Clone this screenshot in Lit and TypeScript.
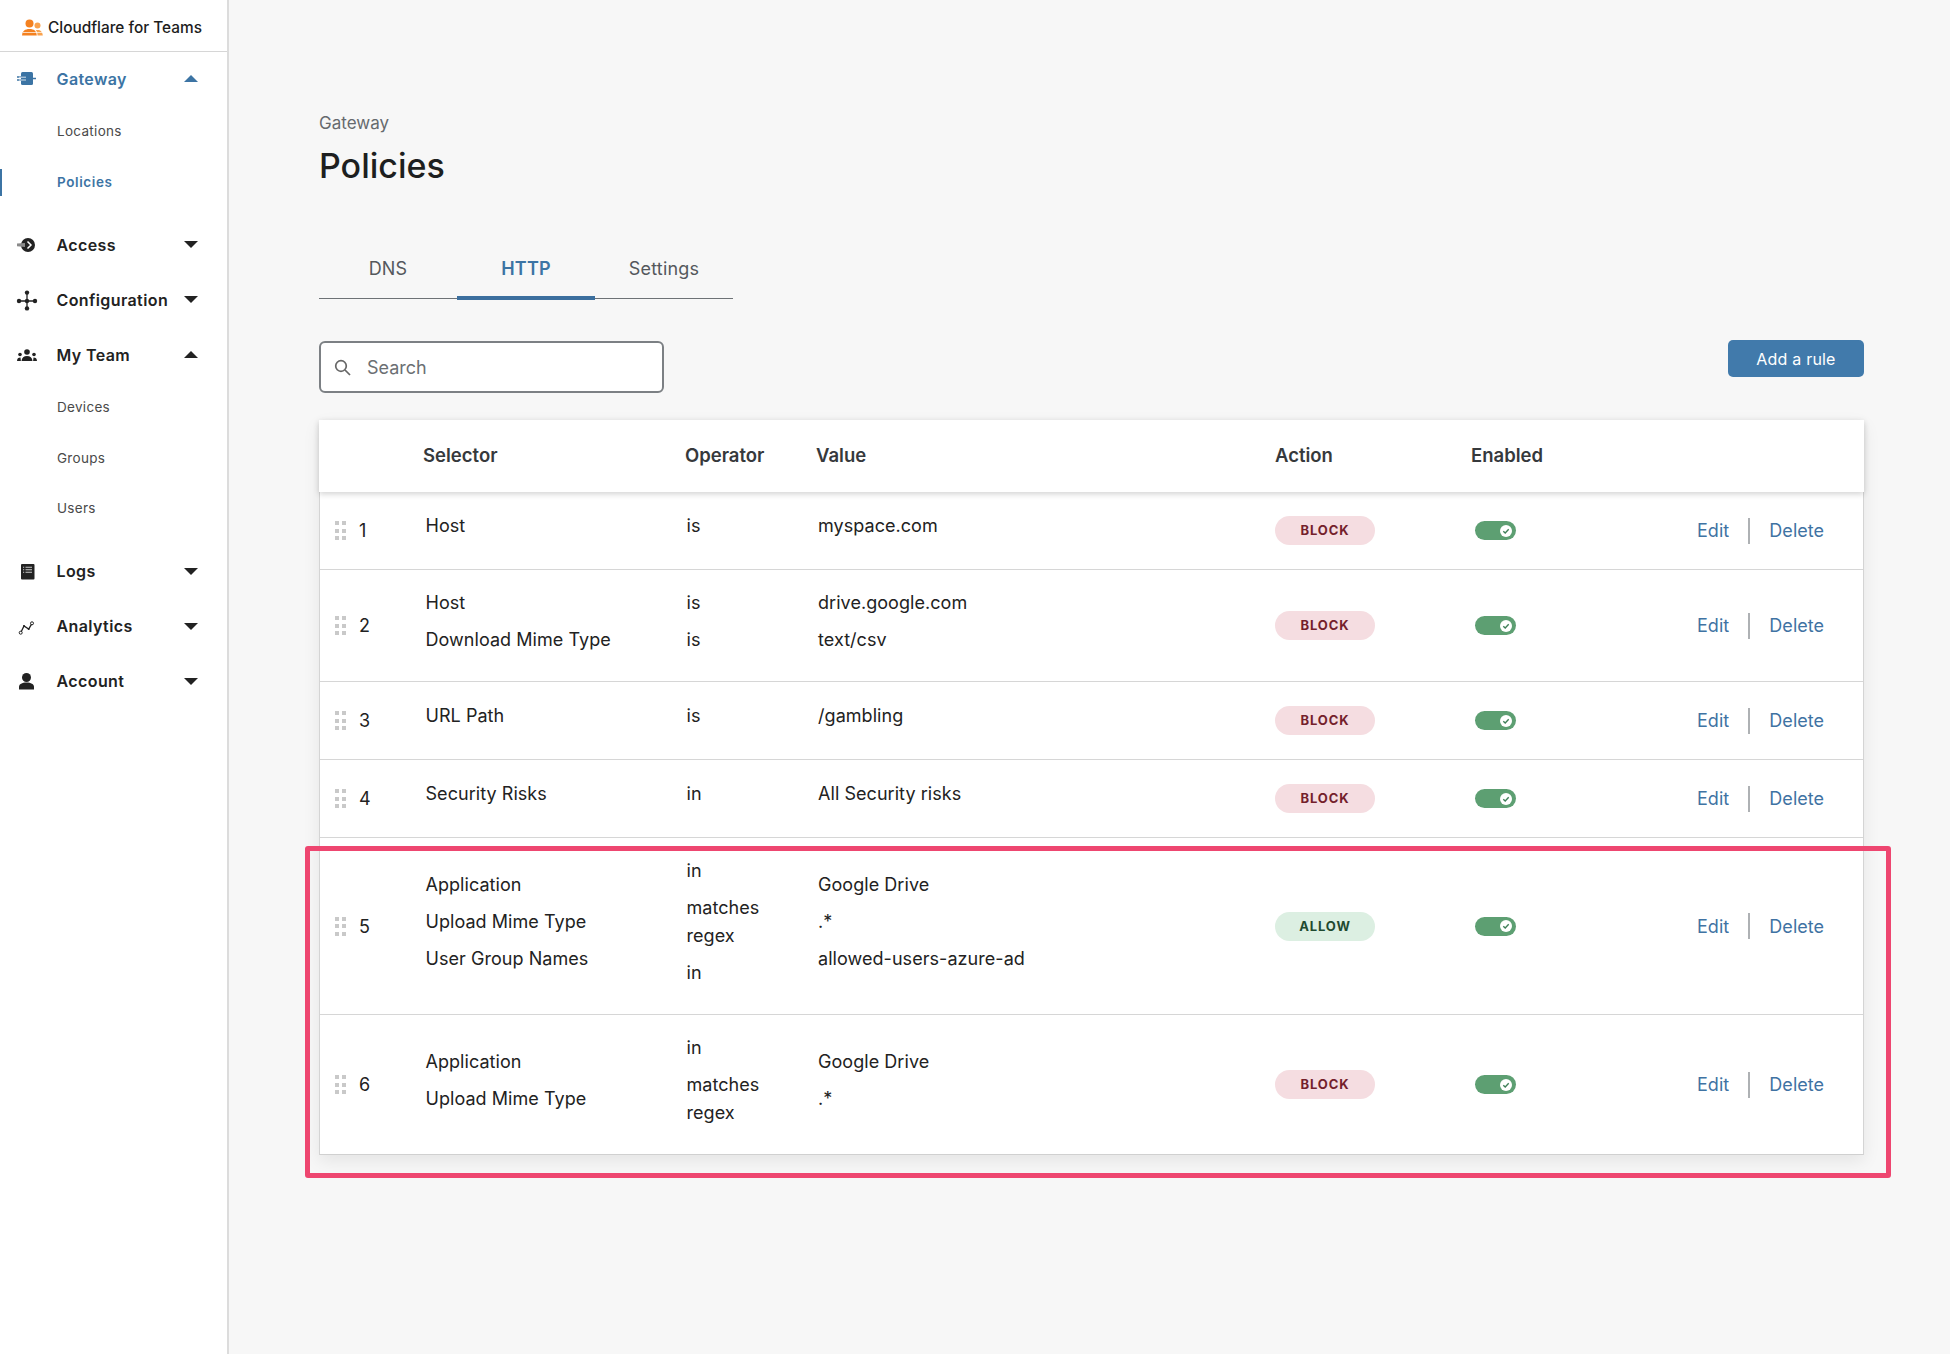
import { LitElement, html, css, svg } from 'lit';
import { customElement } from 'lit/decorators.js';

const icons: Record<string, unknown> = {
  gateway: svg`<rect x="5" y="4" width="12" height="13" rx="1.5" fill="currentColor"/><path d="M1 9h5M1 12h9M16 10.500h4" stroke="currentColor" stroke-width="1.400"/><path d="M3 9.200h7M3 12h7" stroke="#fff" stroke-width="1" opacity=".8"/>`,
  access: svg`<circle cx="12" cy="11" r="7" fill="currentColor"/><path d="M1 9.500l8-.5v4l-8-.8z" fill="#8a8a8a"/><path d="M11.500 7.500l3.500 3.500-3.500 3.500" fill="none" stroke="#fff" stroke-width="1.500"/>`,
  config: svg`<path d="M11 4v15M3 12h16" stroke="currentColor" stroke-width="1.300"/><circle cx="11" cy="3.600" r="2.200" fill="currentColor"/><circle cx="11" cy="19.400" r="2.200" fill="currentColor"/><circle cx="3" cy="12" r="2.200" fill="currentColor"/><circle cx="19" cy="12" r="2.200" fill="currentColor"/><circle cx="11" cy="12" r="2.200" fill="currentColor"/>`,
  team: svg`<circle cx="11" cy="8" r="2.800" fill="currentColor"/><path d="M5.500 17c.3-3.500 2.400-5 5.500-5s5.200 1.500 5.500 5z" fill="currentColor"/><circle cx="4" cy="10.500" r="1.800" fill="currentColor"/><circle cx="18" cy="10.500" r="1.800" fill="currentColor"/><path d="M1 17c.1-2.500 1.200-3.600 3.500-3.600l.4 3.600zM21 17c-.1-2.500-1.200-3.600-3.500-3.600l-.4 3.600z" fill="currentColor"/>`,
  logs: svg`<rect x="5" y="4" width="13.500" height="15.500" rx="1" fill="currentColor"/><path d="M9.500 7.300h6.500M9.500 9.800h6.500M9.500 12.300h6.500" stroke="#ccc" stroke-width="1.100"/><path d="M7 7.300h1.200M7 9.800h1.200M7 12.300h1.200" stroke="#ccc" stroke-width="1.100"/>`,
  analytics: svg`<path d="M4.700 17.700L8 11l4.700 3L16 8.300" fill="none" stroke="currentColor" stroke-width="1.300"/><circle cx="4.700" cy="17.700" r="1.500" fill="#fff" stroke="currentColor"/><circle cx="8" cy="11" r="1" fill="currentColor"/><circle cx="12.700" cy="14" r="1" fill="currentColor"/><circle cx="16" cy="8.300" r="1.500" fill="#fff" stroke="currentColor"/>`,
  account: svg`<circle cx="10.500" cy="7.500" r="4.500" fill="currentColor"/><path d="M3 19.500v-2.500c0-3 3-4.500 7.500-4.500s7.500 1.500 7.500 4.500v2.500z" fill="currentColor"/>`,
};

const nav = [
  { name: 'Gateway', icon: 'gateway', open: true, active: true, subs: ['Locations', 'Policies'] },
  { name: 'Access', icon: 'access' },
  { name: 'Configuration', icon: 'config' },
  { name: 'My Team', icon: 'team', open: true, subs: ['Devices', 'Groups', 'Users'] },
  { name: 'Logs', icon: 'logs' },
  { name: 'Analytics', icon: 'analytics' },
  { name: 'Account', icon: 'account' },
];

const rules = [
  { selectors: ['Host'], ops: ['is'], values: ['myspace.com'], action: 'BLOCK' },
  { selectors: ['Host', 'Download Mime Type'], ops: ['is', 'is'], values: ['drive.google.com', 'text/csv'], action: 'BLOCK' },
  { selectors: ['URL Path'], ops: ['is'], values: ['/gambling'], action: 'BLOCK' },
  { selectors: ['Security Risks'], ops: ['in'], values: ['All Security risks'], action: 'BLOCK' },
  {
    selectors: ['Application', 'Upload Mime Type', 'User Group Names'],
    ops: ['in', 'matches regex', 'in'],
    values: ['Google Drive', '.*', 'allowed-users-azure-ad'],
    action: 'ALLOW',
  },
  {
    selectors: ['Application', 'Upload Mime Type'],
    ops: ['in', 'matches regex'],
    values: ['Google Drive', '.*'],
    action: 'BLOCK',
  },
];

@customElement('app-root')
export class AppRoot extends LitElement {
  static styles = css`
    :host {
      display: flex;
      position: relative;
      width: 1950px;
      height: 1354px;
      overflow: hidden;
      background: #f7f7f7;
      font-family: Inter, 'Liberation Sans', sans-serif;
      color: #222;
    }

    .sidebar {
      width: 227px;
      flex: none;
      background: #fff;
      border-right: 2px solid #dcdcdc;
    }
    .brand {
      height: 48px;
      padding: 3px 0 0 22px;
      display: flex;
      align-items: center;
      gap: 5px;
      border-bottom: 1px solid #d6d6d6;
      font-size: 15.4px;
      font-weight: 500;
      color: #1d1d1d;
    }
    .nav {
      margin-top: -1px;
    }
    .nav-row {
      height: 55px;
      display: flex;
      align-items: center;
      padding-left: 16px;
      font-size: 16px;
      font-weight: 600;
      letter-spacing: 0.4px;
      color: #222;
    }
    .nav-row svg.icon {
      width: 22px;
      height: 22px;
      margin-right: 18.500px;
      flex: none;
    }
    .nav-row .name {
      flex: 1;
    }
    .nav-row svg.caret {
      width: 14px;
      height: 7px;
      margin-right: 29px;
    }
    .nav-row.active {
      color: #3c74a4;
    }
    .subs {
      padding-bottom: 10px;
    }
    .sub {
      height: 50.5px;
      display: flex;
      align-items: center;
      padding-left: 57px;
      font-size: 13.5px;
      letter-spacing: 0.3px;
      color: #4a4a4a;
      box-sizing: border-box;
    }
    .sub.current {
      color: #3c74a4;
      font-weight: 600;
      letter-spacing: 0.6px;
      position: relative;
    }
    .sub.current::before {
      content: '';
      position: absolute;
      left: 0;
      top: 12px;
      width: 2px;
      height: 27px;
      background: #3c74a4;
    }

    .main {
      flex: 1;
      padding: 111px 86px 0 90px;
    }
    .crumb {
      font-size: 17px;
      line-height: 24px;
      color: #666a6e;
    }
    h1 {
      margin: 9px 0 0;
      font-size: 34px;
      line-height: 44px;
      font-weight: 500;
      color: #1d1f20;
    }
    .tabs {
      display: flex;
      width: 414px;
      margin-top: 52px;
      border-bottom: 1px solid #6d7276;
      height: 58px;
      box-sizing: content-box;
    }
    .tab {
      width: 138px;
      height: 60px;
      padding-top: 18px;
      box-sizing: border-box;
      text-align: center;
      font-size: 18px;
      line-height: 22px;
      letter-spacing: 0.2px;
      color: #54585c;
    }
    .tab.active {
      color: #3c74a4;
      font-weight: 600;
      border-bottom: 4px solid #3c6f9e;
    }
    .toolbar {
      display: flex;
      justify-content: space-between;
      align-items: flex-start;
      margin-top: 42px;
    }
    .search {
      width: 345px;
      height: 52px;
      box-sizing: border-box;
      border: 2px solid #7c8084;
      border-radius: 6px;
      background: #fff;
      display: flex;
      align-items: center;
      padding-left: 13px;
      gap: 16px;
      font-size: 18px;
      color: #6b6f73;
    }
    .search svg {
      width: 17px;
      height: 17px;
    }
    .add {
      width: 136px;
      height: 37px;
      margin-top: -1px;
      border-radius: 5px;
      background: #417aab;
      color: #fff;
      font-size: 16px;
      line-height: 38px;
      text-align: center;
      letter-spacing: 0.2px;
    }

    .table {
      margin-top: 27px;
      box-shadow: 0 6px 16px rgba(0, 0, 0, 0.08);
    }
    .head,
    .row {
      display: grid;
    }
    .head {
      grid-template-columns: 104px 262px 131px 459px 196px 197px 1fr;
      position: relative;
      height: 72px;
      padding-bottom: 2px;
      box-sizing: border-box;
      align-items: center;
      background: #fff;
      font-size: 18.5px;
      font-weight: 600;
      color: #36393c;
      box-shadow: 0 2px 6px rgba(0, 0, 0, 0.18);
    }
    .rows {
      border-left: 1px solid #d4d4d4;
      border-right: 1px solid #d4d4d4;
      border-bottom: 1px solid #d0d0d0;
    }
    .row {
      grid-template-columns: 104px 262px 130px 459px 197px 197px 1fr;
      min-height: 78px;
      box-sizing: border-box;
      padding: 13px 0;
      align-items: center;
      background: #fff;
      border-bottom: 1px solid #d6d6d6;
      font-size: 18px;
      letter-spacing: 0.05px;
    }
    .row:last-child {
      border-bottom: none;
    }
    .order {
      display: flex;
      align-items: center;
      padding-left: 15px;
      gap: 13px;
    }
    .dots {
      display: grid;
      grid-template-columns: 4px 4px;
      grid-auto-rows: 4px;
      gap: 3.500px 3px;
    }
    .dots i {
      background: #c9c9c9;
    }
    .cell {
      padding: 1px 0 10px 1.500px;
    }
    .cell.ops {
      padding-left: 0.500px;
      padding-right: 40px;
    }
    .cell.values {
      padding-left: 2px;
    }
    .line {
      padding: 4.500px 0;
      line-height: 28px;
    }
    .pill {
      width: 100px;
      height: 29px;
      border-radius: 15px;
      font-size: 13px;
      font-weight: 700;
      line-height: 29px;
      text-align: center;
      letter-spacing: 0.9px;
      background: #f5dde1;
      color: #741f2c;
    }
    .pill.allow {
      background: #dcefe2;
      color: #1f4a30;
    }
    .toggle {
      width: 41px;
      height: 19px;
      margin-left: 3px;
      border-radius: 10px;
      background: #5d9f72;
      display: flex;
      align-items: center;
      justify-content: flex-end;
      padding-right: 4px;
      box-sizing: border-box;
    }
    .toggle svg {
      width: 12px;
      height: 12px;
    }
    .links {
      display: flex;
      align-items: center;
      padding-left: 28px;
      color: #3f73a3;
    }
    .links .sep {
      width: 2px;
      height: 26px;
      margin: 0 19px;
      background: #aeb1b4;
    }

    .highlight {
      position: absolute;
      left: 305px;
      top: 846px;
      width: 1586px;
      height: 332px;
      box-sizing: border-box;
      border: 5px solid #ee4670;
      border-radius: 3px;
      pointer-events: none;
    }
  `;

  renderNav() {
    return nav.map(
      (item) => html`
        <div class="nav-row ${item.active ? 'active' : ''}">
          <svg class="icon" viewBox="0 0 22 22">${icons[item.icon]}</svg>
          <span class="name">${item.name}</span>
          <svg class="caret" viewBox="0 0 14 7">
            <path d=${item.open ? 'M0 7L7 0l7 7z' : 'M0 0h14L7 7z'} fill="currentColor" />
          </svg>
        </div>
        ${item.subs
          ? html`<div class="subs">
              ${item.subs.map(
                (sub) => html`<div class="sub ${sub === 'Policies' ? 'current' : ''}">${sub}</div>`,
              )}
            </div>`
          : ''}
      `,
    );
  }

  renderRule(rule: (typeof rules)[number], index: number) {
    return html`
      <div class="row">
        <div class="order">
          <span class="dots">${[0, 1, 2, 3, 4, 5].map(() => html`<i></i>`)}</span>
          <span>${index + 1}</span>
        </div>
        <div class="cell">${rule.selectors.map((s) => html`<div class="line">${s}</div>`)}</div>
        <div class="cell ops">${rule.ops.map((s) => html`<div class="line">${s}</div>`)}</div>
        <div class="cell values">${rule.values.map((s) => html`<div class="line">${s}</div>`)}</div>
        <div><div class="pill ${rule.action === 'ALLOW' ? 'allow' : ''}">${rule.action}</div></div>
        <div>
          <div class="toggle">
            <svg viewBox="0 0 12 12">
              <circle cx="6" cy="6" r="6" fill="#fff" />
              <path d="M3.300 6.200l1.900 1.800 3.500-3.700" fill="none" stroke="#3f7f58" stroke-width="1.400" />
            </svg>
          </div>
        </div>
        <div class="links"><span>Edit</span><span class="sep"></span><span>Delete</span></div>
      </div>
    `;
  }

  render() {
    return html`
      <aside class="sidebar">
        <div class="brand">
          <svg width="21" height="17" viewBox="0 0 21 17">
            <circle cx="7.500" cy="4.500" r="4" fill="#f48120" />
            <circle cx="15.500" cy="6.500" r="3" fill="#f9a24d" />
            <path d="M0 16.500c.3-4.500 3-6.500 7.500-6.500s7 2 7.300 6.500z" fill="#f48120" />
            <path d="M15.500 16.500c0-2.600-.6-4.200-1.800-5.400.6-.2 1.200-.2 1.900-.2 3 0 5 2 5.200 5.600z" fill="#f9a24d" />
            <path d="M1 13.500h19" stroke="#fff" stroke-width=".7" />
          </svg>
          <span>Cloudflare for Teams</span>
        </div>
        <div class="nav">${this.renderNav()}</div>
      </aside>

      <main class="main">
        <div class="crumb">Gateway</div>
        <h1>Policies</h1>
        <div class="tabs">
          <div class="tab">DNS</div>
          <div class="tab active">HTTP</div>
          <div class="tab">Settings</div>
        </div>
        <div class="toolbar">
          <div class="search">
            <svg viewBox="0 0 17 17">
              <circle cx="7" cy="7" r="5.300" fill="none" stroke="#666" stroke-width="1.700" />
              <path d="M11 11l5 5" stroke="#666" stroke-width="1.700" />
            </svg>
            <span>Search</span>
          </div>
          <div class="add">Add a rule</div>
        </div>
        <div class="table">
          <div class="head">
            <span></span>
            <span>Selector</span>
            <span>Operator</span>
            <span>Value</span>
            <span>Action</span>
            <span>Enabled</span>
            <span></span>
          </div>
          <div class="rows">${rules.map((rule, i) => this.renderRule(rule, i))}</div>
        </div>
      </main>

      <div class="highlight"></div>
    `;
  }
}
